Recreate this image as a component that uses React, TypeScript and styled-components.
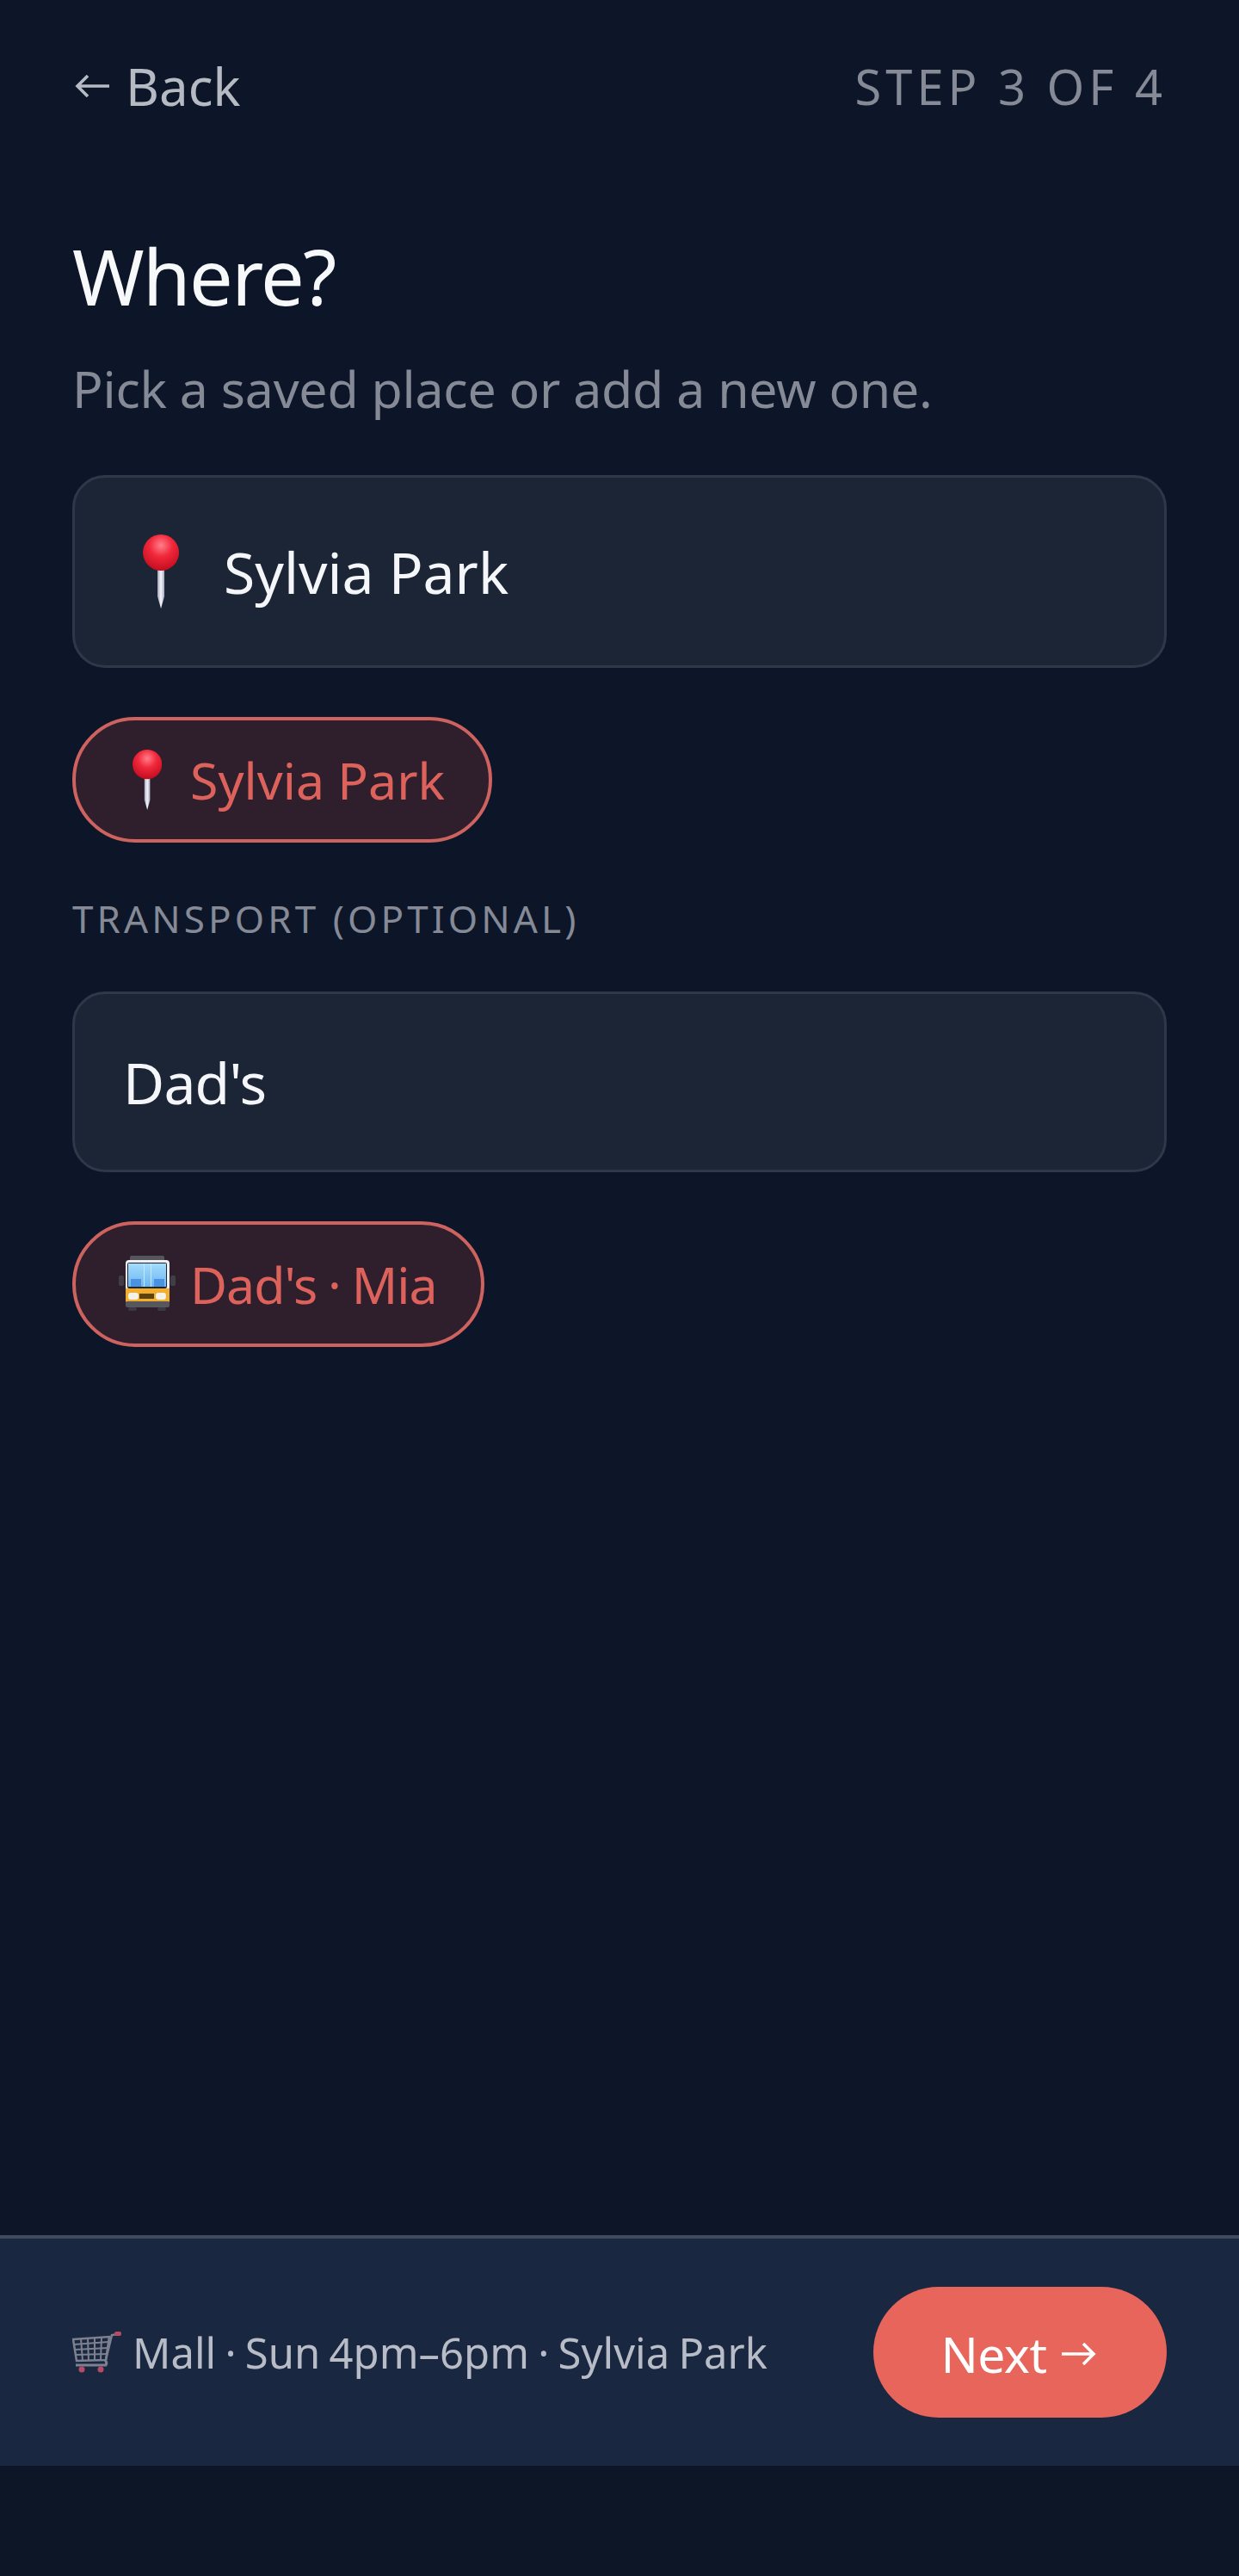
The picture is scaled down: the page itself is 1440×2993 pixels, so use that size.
import styled, { createGlobalStyle } from 'styled-components'

const GlobalStyle = createGlobalStyle`
  html, body {
    margin: 0;
    padding: 0;
    background: #0c1628;
  }
  * {
    box-sizing: border-box;
  }
`

const Page = styled.div`
  display: flex;
  flex-direction: column;
  width: 1440px;
  height: 2993px;
  background: #0c1628;
  font-family: 'Noto Sans', 'Open Sans', sans-serif;
`

const TopBar = styled.header`
  display: flex;
  justify-content: space-between;
  align-items: center;
  height: 80px;
  margin-top: 60px;
  padding: 0 84px;
`

const BackLink = styled.span`
  display: flex;
  align-items: center;
  gap: 19px;
  padding-left: 3px;
  font-size: 60px;
  line-height: 80px;
  color: #b6bac3;
`

const StepLabel = styled.span`
  font-size: 56px;
  line-height: 80px;
  letter-spacing: 5px;
  color: #858a96;
`

const Main = styled.main`
  flex: 1;
  display: flex;
  flex-direction: column;
  align-items: flex-start;
  padding: 118px 84px 0;
`

const Title = styled.h1`
  margin: 0;
  font-size: 90px;
  line-height: 124px;
  letter-spacing: -1.6px;
  font-weight: 400;
  color: #f7f8fa;
`

const Subtitle = styled.p`
  margin: 28px 0 30px;
  font-size: 59px;
  line-height: 82px;
  letter-spacing: -0.25px;
  color: #858a96;
`

const Field = styled.div<{ $height: number }>`
  display: flex;
  align-items: center;
  gap: 29px;
  width: 100%;
  height: ${(p) => p.$height}px;
  margin-top: 30px;
  padding: 0 56px;
  background: #1b2535;
  border: 3px solid #2e3848;
  border-radius: 38px;
  font-size: 66px;
  color: #f4f6f9;
`

const Chip = styled.div`
  display: flex;
  align-items: center;
  gap: 17px;
  height: 146px;
  margin-top: 57px;
  padding: 0 51px 0 50px;
  background: #2f1f2d;
  border: 4px solid #cd625e;
  border-radius: 73px;
  font-size: 59px;
  color: #dd625b;
`

const TightText = styled.span<{ $tracking?: number; $spacing?: number }>`
  letter-spacing: ${(p) => p.$tracking ?? 0}px;
  word-spacing: ${(p) => p.$spacing ?? 0}px;
`

const EmojiBox = styled.span<{ $size: number }>`
  display: flex;
  justify-content: center;
  flex: none;
  width: ${(p) => p.$size}px;
`

const SectionLabel = styled.div`
  margin: 58px 0 25px;
  font-size: 44px;
  line-height: 60px;
  letter-spacing: 4.1px;
  color: #858a96;
`

const Summary = styled.footer`
  display: flex;
  justify-content: space-between;
  align-items: center;
  height: 268px;
  padding: 0 84px;
  background: #1a2740;
  border-top: 4px solid #414b60;
`

const SummaryText = styled.div`
  display: flex;
  align-items: center;
  gap: 12px;
  font-size: 49px;
  color: #b7bcc6;
`

const NextButton = styled.button`
  display: flex;
  justify-content: center;
  align-items: center;
  gap: 17px;
  width: 341px;
  height: 152px;
  padding: 4px 4px 0 0;
  border: 0;
  border-radius: 76px;
  background: #e7655b;
  color: #ffffff;
  font-family: inherit;
  font-size: 57px;
  letter-spacing: -0.5px;
`

const BottomGap = styled.div`
  height: 128px;
  background: #0d1627;
`

const Arrow = ({ flip, color }: { flip?: boolean; color: string }) => (
  <svg
    width="40"
    height="26"
    viewBox="0 0 40 26"
    fill="none"
    stroke={color}
    strokeWidth="3.6"
    style={{ flex: 'none', transform: flip ? 'scaleX(-1)' : undefined }}
  >
    <path d="M40 13H3M15 1 3 13l12 12" />
  </svg>
)

const Pin = ({ height, id }: { height: number; id: string }) => (
  <svg width={height * 0.49} height={height} viewBox="0 0 42 86" style={{ flex: 'none' }}>
    <defs>
      <radialGradient id={`${id}-ball`} cx="0.5" cy="0.3" r="0.7">
        <stop offset="0" stopColor="#ff7f8a" />
        <stop offset="0.45" stopColor="#f2283c" />
        <stop offset="1" stopColor="#c20d1e" />
      </radialGradient>
      <linearGradient id={`${id}-needle`} x1="0" x2="1" y1="0" y2="0">
        <stop offset="0" stopColor="#a7a9bd" />
        <stop offset="0.5" stopColor="#f4f4fb" />
        <stop offset="1" stopColor="#a7a9bd" />
      </linearGradient>
    </defs>
    <path d="M17 38h8v34l-4 14-4-14z" fill={`url(#${id}-needle)`} />
    <circle cx="21" cy="21" r="21" fill={`url(#${id}-ball)`} />
  </svg>
)

const Bus = () => (
  <svg width="66" height="66" viewBox="0 0 66 66" style={{ flex: 'none' }}>
    <defs>
      <linearGradient id="bus-glass" x1="0" x2="0" y1="0" y2="1">
        <stop offset="0" stopColor="#a4dcfb" />
        <stop offset="1" stopColor="#6cb6f2" />
      </linearGradient>
    </defs>
    <rect x="13" y="0" width="40" height="8" rx="2" fill="#55565c" />
    <rect x="0" y="23" width="6" height="12" rx="2" fill="#3f3f45" />
    <rect x="60" y="23" width="6" height="12" rx="2" fill="#3f3f45" />
    <rect x="8" y="5" width="51" height="36" rx="4" fill="#eef0f3" />
    <rect x="10" y="8" width="46" height="30" rx="2" fill="#23262e" />
    <rect x="11" y="9" width="44" height="27" fill="url(#bus-glass)" />
    <path d="M29 9h1v27h-1zM37 9h1v27h-1z" fill="#c4e9fc" />
    <path d="M14 27h12v9H14zM41 27h12v9H41z" fill="#4a92e2" />
    <rect x="8" y="38" width="51" height="16" rx="1" fill="#f2ae2c" />
    <rect x="11" y="43" width="12" height="8" rx="3" fill="#f3f2ea" />
    <rect x="43" y="43" width="12" height="8" rx="3" fill="#f3f2ea" />
    <rect x="24" y="44" width="17" height="6" fill="#5b4310" />
    <rect x="8" y="53" width="51" height="7" rx="2" fill="#56565c" />
    <rect x="11" y="60" width="10" height="4" rx="2" fill="#3a3a40" />
    <rect x="45" y="60" width="10" height="4" rx="2" fill="#3a3a40" />
  </svg>
)

const Cart = () => (
  <svg width="58" height="49" viewBox="0 0 58 49" style={{ flex: 'none' }}>
    <g fill="none" stroke="#7d818f" strokeWidth="2">
      <path d="M1 9 43 6 39 33 5 34z" strokeWidth="2.5" />
      <path d="M2 15 42 12M3 21 41 19M4 27 40 26" />
      <path d="M10 8 12 34M18 8 19 34M26 7 26 33M34 7 33 33" />
      <path d="M39 33 46 4 53 3" strokeWidth="2.5" />
      <path d="M4 39H39q2-3-1-6" strokeWidth="3" />
    </g>
    <rect x="49" y="0" width="8" height="5" rx="2" fill="#b84a66" />
    <circle cx="11" cy="44" r="3.5" fill="#b84a66" />
    <circle cx="33" cy="44" r="3.5" fill="#b84a66" />
  </svg>
)

export default function App() {
  return (
    <>
      <GlobalStyle />
      <Page>
        <TopBar>
          <BackLink>
            <Arrow color="#b6bac3" />
            <span>Back</span>
          </BackLink>
          <StepLabel>STEP 3 OF 4</StepLabel>
        </TopBar>
        <Main>
          <Title>Where?</Title>
          <Subtitle>Pick a saved place or add a new one.</Subtitle>
          <Field $height={224}>
            <EmojiBox $size={88}>
              <Pin height={86} id="field-pin" />
            </EmojiBox>
            <span>Sylvia Park</span>
          </Field>
          <Chip>
            <EmojiBox $size={66}>
              <Pin height={70} id="chip-pin" />
            </EmojiBox>
            <span>Sylvia Park</span>
          </Chip>
          <SectionLabel>TRANSPORT (OPTIONAL)</SectionLabel>
          <Field $height={210}>
            <TightText $tracking={-0.8}>Dad's</TightText>
          </Field>
          <Chip>
            <Bus />
            <TightText $tracking={-1} $spacing={-1.5}>
              Dad's · Mia
            </TightText>
          </Chip>
        </Main>
        <Summary>
          <SummaryText>
            <Cart />
            <TightText $spacing={-2.5}>Mall · Sun 4pm–6pm · Sylvia Park</TightText>
          </SummaryText>
          <NextButton>
            <span>Next</span>
            <Arrow flip color="#ffffff" />
          </NextButton>
        </Summary>
        <BottomGap />
      </Page>
    </>
  )
}
